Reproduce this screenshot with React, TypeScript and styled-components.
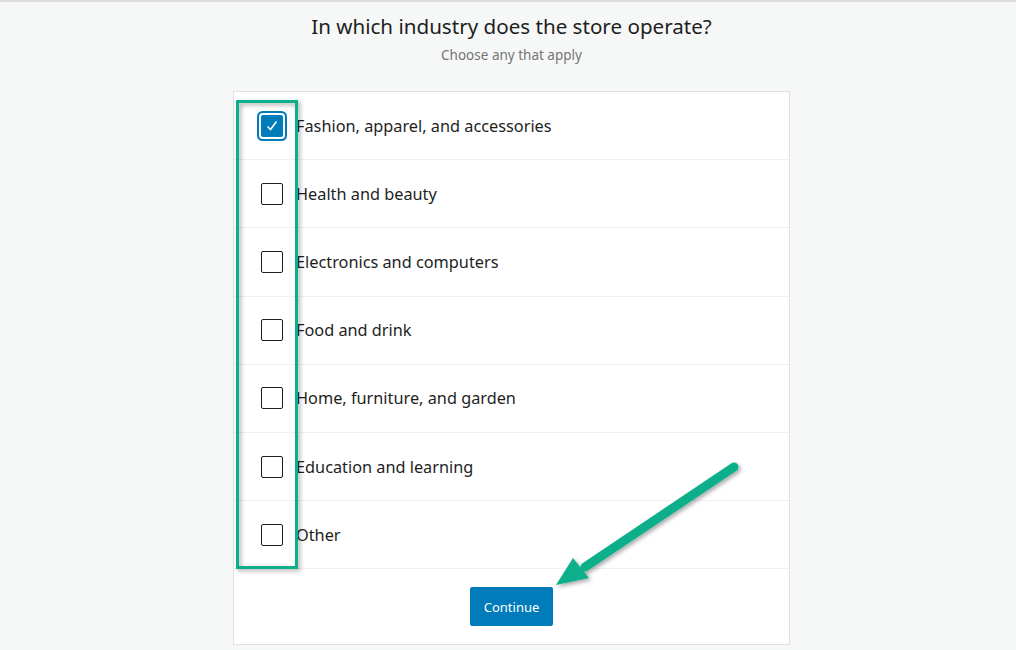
import React, { useState } from 'react';
import styled, { createGlobalStyle } from 'styled-components';

const GlobalStyle = createGlobalStyle`
  html, body {
    margin: 0;
    padding: 0;
    background: #f6f7f7;
    font-family: "Noto Sans", "Open Sans", Arial, sans-serif;
  }
`;

const Page = styled.div`
  position: relative;
  width: 1016px;
  height: 650px;
  overflow: hidden;
  border-top: 2px solid #dcdcde;
  box-sizing: border-box;
  padding-left: 7px;
  display: flex;
  flex-direction: column;
  align-items: center;
`;

const Title = styled.h2`
  margin: 10px 0 0;
  font-size: 20.6px;
  font-weight: 400;
  line-height: 28px;
  color: #1e1e1e;
`;

const Subtitle = styled.p`
  margin: 6px 0 0;
  font-size: 13.5px;
  line-height: 18px;
  color: #757575;
`;

const Card = styled.div`
  margin-top: 27px;
  width: 557px;
  background: #fff;
  border: 1px solid #e0e0e0;
  box-sizing: border-box;
`;

const Row = styled.label`
  display: flex;
  align-items: center;
  height: 68.2px;
  padding-left: 27px;
  border-bottom: 1px solid #f0f0f0;
  box-sizing: border-box;
  cursor: pointer;
`;

const Box = styled.span<{ $checked: boolean }>`
  width: 22px;
  height: 22px;
  box-sizing: border-box;
  border-radius: 2px;
  border: 1px solid ${(p) => (p.$checked ? '#007cba' : '#1e1e1e')};
  background: ${(p) => (p.$checked ? '#007cba' : '#fff')};
  box-shadow: ${(p) => (p.$checked ? '0 0 0 2px #fff, 0 0 0 4px #007cba' : 'none')};
  display: flex;
  align-items: center;
  justify-content: center;
  margin-right: 13px;
  flex-shrink: 0;
`;

const Label = styled.span`
  font-size: 16.3px;
  color: #1e1e1e;
`;

const Footer = styled.div`
  display: flex;
  justify-content: center;
  padding: 18px 0 18px;
`;

const Button = styled.button`
  height: 39px;
  width: 83px;
  border: none;
  border-radius: 2px;
  background: #007cba;
  color: #fff;
  font-family: inherit;
  font-size: 13px;
  cursor: pointer;
`;

const Overlay = styled.svg`
  position: absolute;
  left: 0;
  top: 0;
  pointer-events: none;
`;

const options = [
  'Fashion, apparel, and accessories',
  'Health and beauty',
  'Electronics and computers',
  'Food and drink',
  'Home, furniture, and garden',
  'Education and learning',
  'Other',
];

export default function App() {
  const [checked, setChecked] = useState<string[]>([options[0]]);

  const toggle = (o: string) =>
    setChecked((prev) => (prev.includes(o) ? prev.filter((x) => x !== o) : [...prev, o]));

  return (
    <>
      <GlobalStyle />
      <Page>
        <Title>In which industry does the store operate?</Title>
        <Subtitle>Choose any that apply</Subtitle>
        <Card>
          {options.map((o) => {
            const on = checked.includes(o);
            return (
              <Row key={o} onClick={() => toggle(o)}>
                <Box $checked={on}>
                  {on && (
                    <svg width="16" height="16" viewBox="0 0 16 16">
                      <path d="M3.5 8.5 L6.5 11.5 L12.5 3.5" fill="none" stroke="#fff" strokeWidth="1.6" />
                    </svg>
                  )}
                </Box>
                <Label>{o}</Label>
              </Row>
            );
          })}
          <Footer>
            <Button>Continue</Button>
          </Footer>
        </Card>
        <Overlay width="1016" height="650" viewBox="0 0 1016 650">
          <defs>
            <filter id="sh" x="-20%" y="-20%" width="140%" height="140%">
              <feDropShadow dx="2" dy="2" stdDeviation="2" floodColor="#000" floodOpacity="0.35" />
            </filter>
          </defs>
          <rect x="237.5" y="99.5" width="59" height="466" fill="none" stroke="#0aaf8a" strokeWidth="3" filter="url(#sh)" />
          <g filter="url(#sh)">
            <line x1="734" y1="465" x2="585" y2="565" stroke="#0aaf8a" strokeWidth="9" strokeLinecap="round" />
            <polygon points="556,583 573,556 589,576" fill="#0aaf8a" />
          </g>
        </Overlay>
      </Page>
    </>
  );
}
